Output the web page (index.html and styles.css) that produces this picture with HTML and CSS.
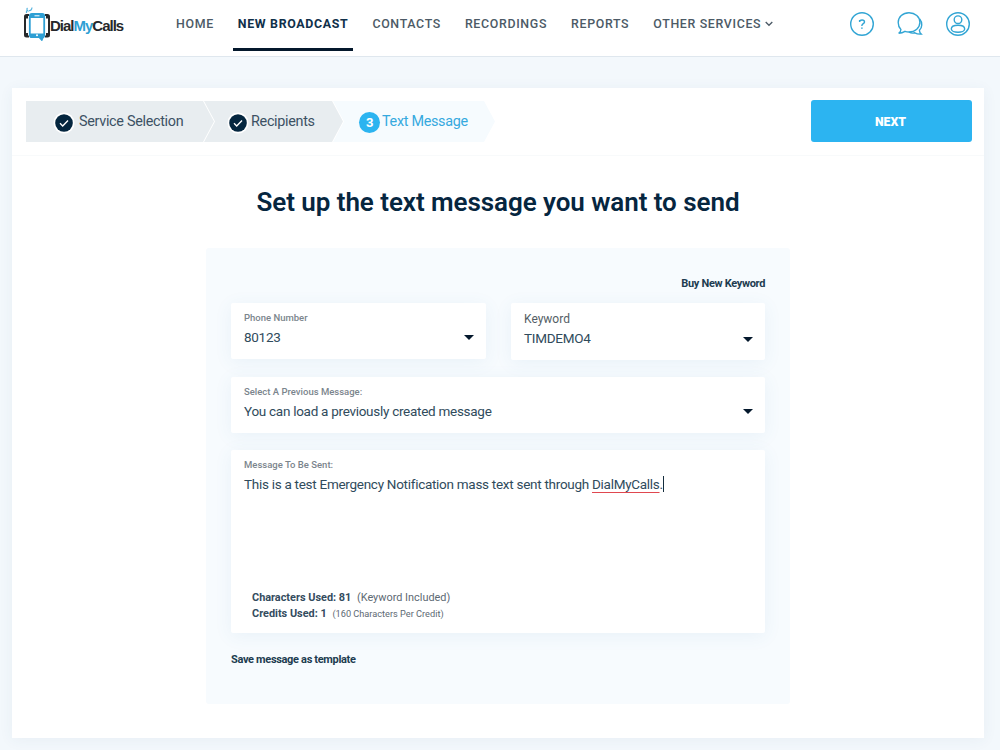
FILE: index.html
```
<!DOCTYPE html>
<html lang="en">
<head>
    <meta charset="UTF-8">
    <meta name="viewport" content="width=device-width, initial-scale=1.0">
    <title>DialMyCalls - New Broadcast</title>
    <link rel="stylesheet" href="styles.css">
</head>
<body>
    <header class="header">
        <a class="logo" href="#">
            <svg class="logo-icon" width="26" height="36" viewBox="0 0 26 36">
                <path d="M5 10H2.5Q1 10 1 11.500V30Q1 31.500 2.500 31.500H5M21 10h2.500Q25 10 25 11.500V30q0 1.500-1.500 1.500H21" fill="none" stroke="#26282b" stroke-width="2"/>
                <path d="M1 10.500h3v3H1zM1 28h3v3H1zM22 10.500h3v3h-3zM22 28h3v3h-3z" fill="#26282b"/>
                <rect x="5.800" y="8.800" width="14.400" height="23.400" rx="2" fill="#fff" stroke="#2e9fd4" stroke-width="1.800"/>
                <path d="M6 9h14v4H6zM6 28.500h14v4H6z" fill="#2e9fd4"/>
                <path d="M10.500 10.800h5" stroke="#fff"/>
                <circle cx="13" cy="30.300" r="1" fill="#fff"/>
                <path d="M14 32h6l-2 4.500z" fill="#2e9fd4"/>
                <path d="M2.500 8V5.500M4.500 6.500Q2 4.500 3.500 3M5 5.500q2.500.5 3-3" fill="none" stroke="#58b5df" stroke-width="1.200"/>
            </svg>
            <span class="logo-text">Dial<span>My</span>Calls</span>
        </a>
        <nav class="nav">
            <a href="#">HOME</a>
            <a href="#" class="active">NEW BROADCAST</a>
            <a href="#">CONTACTS</a>
            <a href="#">RECORDINGS</a>
            <a href="#">REPORTS</a>
            <a href="#">OTHER SERVICES<svg class="chevron" width="8" height="6" viewBox="0 0 8 6"><path d="M.7 1 4 4.300 7.300 1" fill="none" stroke="#4c5a66" stroke-width="1.300"/></svg></a>
        </nav>
        <div class="tools">
            <svg width="26" height="26" viewBox="0 0 26 26">
                <circle cx="13" cy="13" r="11.300"/>
                <path d="M10.600 11V9.800h1M10.800 10Q11 9 13 9c1.700 0 2.500.8 2.500 1.900 0 1.700-2.600 1.700-2.600 3.600v.5"/>
                <path d="M12.900 16.400v1.300" stroke-width="1.600"/>
            </svg>
            <svg width="26" height="26" viewBox="0 0 26 26">
                <path d="M1.700 22.200c1.700-.9 2.300-2 2.200-3.800C2 16.500 1.200 14.300 1.200 11.500 1.200 5.800 5.800 1.700 12 1.700s10.900 4.200 10.900 9.600S18.200 21 12 21c-1.500 0-2.900-.2-4-.6-1.900 1.200-3.900 1.800-6.300 1.800z"/>
                <path d="M22.700 8c2.900 3.700 2.700 8.300-.3 11.200.1 1.700.5 2.700 1.800 3.900-3 .2-4.700-.3-6.400-1.300-2 .5-4 .3-5.700-.6"/>
            </svg>
            <svg width="26" height="26" viewBox="0 0 26 26">
                <circle cx="13" cy="13" r="11.300"/>
                <circle cx="13" cy="8.700" r="3.800"/>
                <path d="M6.300 18c0-2.400 3-3.700 6.700-3.700s6.700 1.300 6.700 3.700c0 1.800-3 3.200-6.700 3.200S6.300 19.800 6.300 18z"/>
            </svg>
        </div>
    </header>

    <main class="card">
        <div class="toolbar">
            <ol class="steps">
                <li class="step step-service">
                    <svg width="22" height="22" viewBox="0 0 22 22"><circle cx="11" cy="11" r="10.500" fill="#fff"/><circle cx="11" cy="11" r="8.800" fill="#04263f"/><path d="m7 11.300 2.700 2.600 5.300-5.400" fill="none" stroke="#fff" stroke-width="1.400"/></svg>
                    <span>Service Selection</span>
                </li>
                <li class="step step-recipients">
                    <svg width="22" height="22" viewBox="0 0 22 22"><circle cx="11" cy="11" r="10.500" fill="#fff"/><circle cx="11" cy="11" r="8.800" fill="#04263f"/><path d="m7 11.300 2.700 2.600 5.300-5.400" fill="none" stroke="#fff" stroke-width="1.400"/></svg>
                    <span>Recipients</span>
                </li>
                <li class="step step-message">
                    <b class="number">3</b>
                    <span>Text Message</span>
                </li>
            </ol>
            <button class="next">NEXT</button>
        </div>

        <h1>Set up the text message you want to send</h1>

        <section class="panel">
            <a class="buy" href="#">Buy New Keyword</a>
            <div class="row">
                <div class="field phone">
                    <label>Phone Number</label>
                    <div class="value">80123</div>
                    <i class="caret"></i>
                </div>
                <div class="field keyword">
                    <label>Keyword</label>
                    <div class="value">TIMDEMO4</div>
                    <i class="caret"></i>
                </div>
            </div>
            <div class="field previous">
                <label>Select A Previous Message:</label>
                <div class="value">You can load a previously created message</div>
                <i class="caret"></i>
            </div>
            <div class="field message">
                <label>Message To Be Sent:</label>
                <div class="value">This is a test Emergency Notification mass text sent through <span class="spelling">DialMyCalls</span>.<i class="cursor"></i></div>
                <div class="usage">
                    <div><b>Characters Used: 81</b> <span class="included">(Keyword Included)</span></div>
                    <div><b>Credits Used: 1</b> <span class="credit">(160 Characters Per Credit)</span></div>
                </div>
            </div>
            <a class="save" href="#">Save message as template</a>
        </section>
    </main>
</body>
</html>
```
FILE: styles.css
```
* {
    box-sizing: border-box;
}
body {
    margin: 0;
    height: 750px;
    overflow: hidden;
    background: #f3f8fc;
    font-family: Roboto, "Liberation Sans", sans-serif;
    color: #1d3c50;
}
a {
    color: inherit;
    text-decoration: none;
}

/* header */
.header {
    display: flex;
    height: 57px;
    background: #fff;
    border-bottom: 1px solid #dfe7ee;
}
.logo {
    display: flex;
    width: 152px;
    padding: 5px 0 0 24px;
}
.logo-text {
    padding-top: 11px;
    font: bold 15px/20px "Liberation Sans", sans-serif;
    letter-spacing: -1px;
    color: #26282b;
}
.logo-text span {
    color: #2e9fd4;
}
.nav {
    display: flex;
    gap: 14px;
    padding-left: 19px;
}
.nav a {
    height: 51px;
    padding: 0 5px;
    border-bottom: 3px solid transparent;
    font-size: 12.4px;
    font-weight: 500;
    line-height: 48px;
    letter-spacing: .66px;
    white-space: nowrap;
    color: #4c5a66;
}
.nav .active {
    border-color: #04182c;
    font-weight: 700;
    color: #10304a;
}
.chevron {
    margin-left: 4px;
    vertical-align: 1px;
}
.tools {
    display: flex;
    gap: 22px;
    margin-left: auto;
    padding: 11px 29px 0 0;
}
.tools svg {
    fill: none;
    stroke: #32a5d4;
    stroke-width: 1.4;
}

/* card */
.card {
    width: 972px;
    height: 650px;
    margin: 31px 0 0 12px;
    background: #fff;
    box-shadow: 0 2px 14px rgba(50, 90, 120, .06);
}
.toolbar {
    display: flex;
    justify-content: space-between;
    height: 68px;
    padding: 12px 12px 0 14px;
    border-bottom: 1px solid #f8fafb;
}
.steps {
    display: flex;
    height: 41px;
    margin: 1px 0 0;
    padding: 0;
    list-style: none;
    font-size: 14.4px;
    letter-spacing: -.31px;
    line-height: 42px;
    color: #3c5164;
}
.step {
    display: flex;
    align-items: center;
    background: #e8edf0;
    clip-path: polygon(0 0, calc(100% - 11px) 0, 100% 50%, calc(100% - 11px) 100%, 0 100%, 11px 50%);
}
.step span {
    padding-top: 1px;
}
.step-service {
    width: 188px;
    padding-left: 27px;
    gap: 4px;
    clip-path: polygon(0 0, calc(100% - 11px) 0, 100% 50%, calc(100% - 11px) 100%, 0 100%);
}
.step-recipients {
    width: 139px;
    margin-left: -10px;
    padding-left: 23px;
    gap: 2px;
}
.step-message {
    width: 162px;
    margin-left: -10px;
    padding-left: 26px;
    gap: 2px;
    background: #f6fbfe;
    color: #35a9de;
}
.number {
    width: 21px;
    height: 21px;
    margin-top: 1px;
    border-radius: 50%;
    background: #2cb4f0;
    color: #fff;
    font-size: 13px;
    line-height: 21px;
    text-align: center;
}
.step svg {
    margin-top: 2px;
}
.next {
    width: 161px;
    height: 42px;
    padding: 2px 2px 0 0;
    border: 0;
    border-radius: 3px;
    background: #2cb4f1;
    color: #fff;
    font: 900 12.3px Roboto, sans-serif;
}
h1 {
    margin: 29px 0 28px;
    font-size: 26px;
    font-weight: 600;
    line-height: 35px;
    letter-spacing: -.06px;
    text-align: center;
    color: #06263f;
}

/* message form */
.panel {
    width: 584px;
    height: 456px;
    margin-left: 194px;
    padding: 28px 25px 0;
    border-radius: 3px;
    background: #f7fbfe;
}
.buy,
.save {
    display: block;
    font-size: 11px;
    font-weight: 700;
    line-height: 16px;
    letter-spacing: -.33px;
}
.buy {
    height: 15px;
    text-align: right;
}
.row {
    display: flex;
    align-items: flex-start;
    justify-content: space-between;
    height: 74px;
    padding-top: 12px;
    margin-bottom: 12px;
}
.field {
    position: relative;
    padding: 8px 13px;
    background: #fff;
    border-radius: 2px;
    box-shadow: 0 3px 18px rgba(70, 130, 180, .08);
}
.field label {
    display: block;
    font-size: 9.5px;
    font-weight: 500;
    line-height: 14px;
    color: #7b858d;
}
.value {
    margin-top: 2px;
    font-size: 13.5px;
    line-height: 21px;
    letter-spacing: -.28px;
    color: #304b5c;
}
.phone {
    width: 255px;
    height: 56px;
}
.keyword {
    width: 254px;
    height: 57px;
}
.field.keyword label {
    font-size: 12px;
    line-height: 17px;
    font-weight: 400;
    color: #545e66;
}
.keyword .value {
    margin-top: 0;
}
.previous {
    height: 56px;
    margin-bottom: 17px;
}
.message {
    display: flex;
    flex-direction: column;
    height: 183px;
}
.message .value {
    margin-top: 2px;
}
.caret {
    position: absolute;
    right: 12px;
    top: 32px;
    border: 5px solid transparent;
    border-top-color: #04182c;
    border-bottom: 0;
}
.keyword .caret {
    top: 34px;
}
.spelling {
    text-decoration: underline 1px #e0474f;
    text-decoration-skip-ink: none;
    text-underline-offset: 3px;
}
.cursor {
    display: inline-block;
    width: 1px;
    height: 16px;
    margin-left: 0;
    background: #152d3d;
    vertical-align: -3px;
}
.usage {
    margin-top: auto;
    padding: 0 0 3px 8px;
    font-size: 10.9px;
    line-height: 16px;
    color: #5d6973;
}
.usage b {
    color: #344c5e;
}
.included {
    margin-left: 3px;
}
.credit {
    margin-left: 3px;
    font-size: 9.2px;
}
.save {
    margin-top: 19px;
}
```
